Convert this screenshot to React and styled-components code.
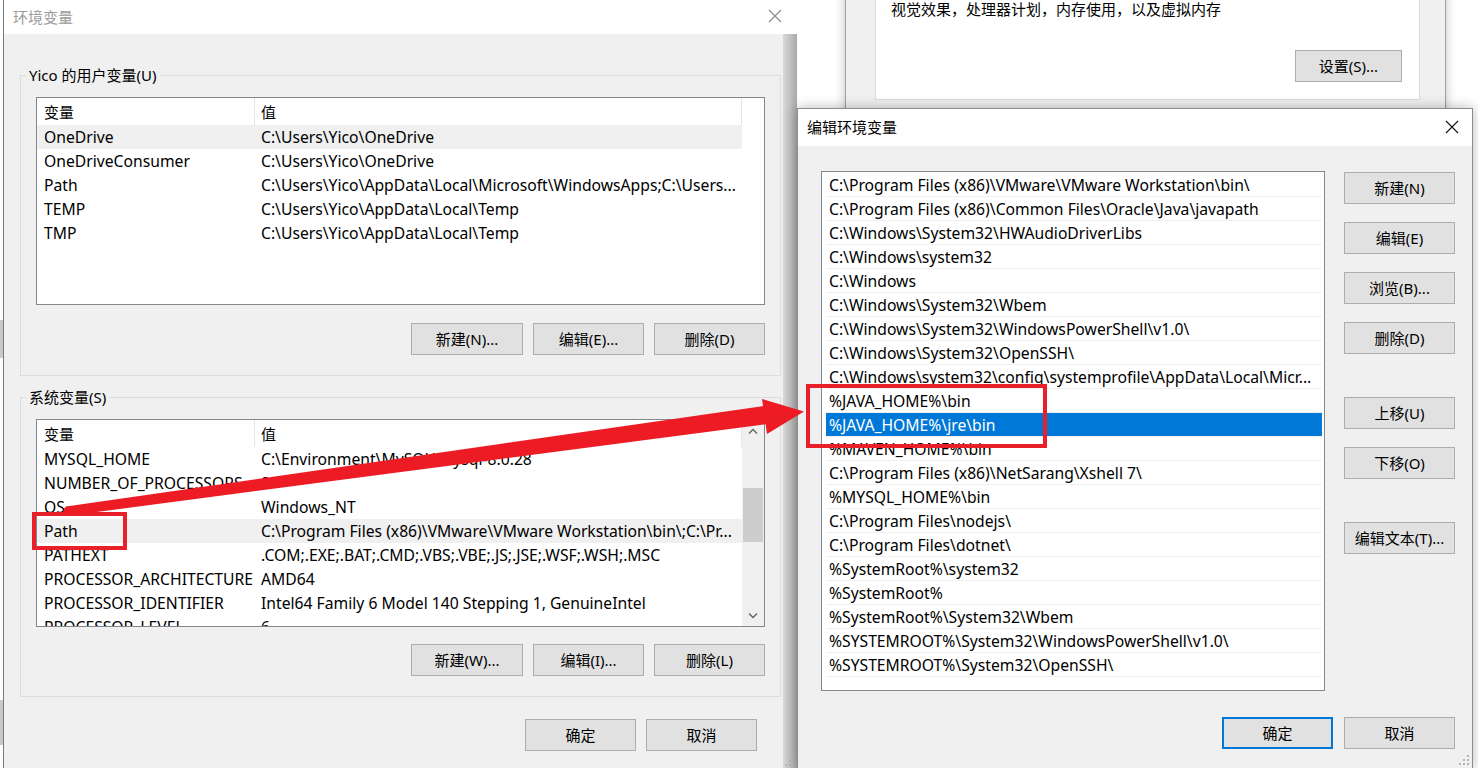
import React from "react";
import styled, { createGlobalStyle } from "styled-components";

const bs = (s) => s.replace(/\//g, "\\");

const userVars = [
  ["OneDrive", "C:/Users/Yico/OneDrive", true],
  ["OneDriveConsumer", "C:/Users/Yico/OneDrive"],
  ["Path", "C:/Users/Yico/AppData/Local/Microsoft/WindowsApps;C:/Users..."],
  ["TEMP", "C:/Users/Yico/AppData/Local/Temp"],
  ["TMP", "C:/Users/Yico/AppData/Local/Temp"],
];

const systemVars = [
  ["MYSQL_HOME", "C:/Environment/MySQL/mysql-8.0.28"],
  ["NUMBER_OF_PROCESSORS", "8"],
  ["OS", "Windows_NT"],
  ["Path", "C:/Program Files (x86)/VMware/VMware Workstation/bin/;C:/Pr...", true],
  ["PATHEXT", ".COM;.EXE;.BAT;.CMD;.VBS;.VBE;.JS;.JSE;.WSF;.WSH;.MSC"],
  ["PROCESSOR_ARCHITECTURE", "AMD64"],
  ["PROCESSOR_IDENTIFIER", "Intel64 Family 6 Model 140 Stepping 1, GenuineIntel"],
  ["PROCESSOR_LEVEL", "6"],
];

const pathEntries = [
  "C:/Program Files (x86)/VMware/VMware Workstation/bin/",
  "C:/Program Files (x86)/Common Files/Oracle/Java/javapath",
  "C:/Windows/System32/HWAudioDriverLibs",
  "C:/Windows/system32",
  "C:/Windows",
  "C:/Windows/System32/Wbem",
  "C:/Windows/System32/WindowsPowerShell/v1.0/",
  "C:/Windows/System32/OpenSSH/",
  "C:/Windows/system32/config/systemprofile/AppData/Local/Micr...",
  "%JAVA_HOME%/bin",
  "%JAVA_HOME%/jre/bin",
  "%MAVEN_HOME%/bin",
  "C:/Program Files (x86)/NetSarang/Xshell 7/",
  "%MYSQL_HOME%/bin",
  "C:/Program Files/nodejs/",
  "C:/Program Files/dotnet/",
  "%SystemRoot%/system32",
  "%SystemRoot%",
  "%SystemRoot%/System32/Wbem",
  "%SYSTEMROOT%/System32/WindowsPowerShell/v1.0/",
  "%SYSTEMROOT%/System32/OpenSSH/",
];

const sideButtons = [
  ["新建(N)", 1],
  ["编辑(E)", 18],
  ["浏览(B)...", 18],
  ["删除(D)", 18],
  ["上移(U)", 43],
  ["下移(O)", 18],
  ["编辑文本(T)...", 43],
];

const GlobalStyle = createGlobalStyle`
  * { box-sizing: border-box; }
  body {
    margin: 0;
    background: #fff;
    font-family: "Noto Sans", "Noto Sans CJK SC", sans-serif;
    font-size: 15px;
    color: #000;
  }
`;

const Desktop = styled.div`
  position: relative;
  width: 1478px;
  height: 768px;
  overflow: hidden;
  background: #fff;
`;

const LeftStrip = styled.div`
  position: absolute;
  left: 0;
  top: 0;
  width: 3px;
  height: 768px;
  background: linear-gradient(
    to bottom,
    #fff 0 320px,
    #c8c8c8 320px 358px,
    #fff 358px 700px,
    #c8c8c8 700px 745px,
    #fff 745px
  );
`;

/* ---------- windows ---------- */

const BackWindow = styled.div`
  position: absolute;
  left: 845px;
  top: -20px;
  width: 601px;
  height: 240px;
  z-index: 1;
  background: #f0f0f0;
  border-left: 1px solid #a0a0a0;
  border-right: 1px solid #a0a0a0;
  box-shadow: 0 0 10px rgba(0, 0, 0, 0.25);
  padding-left: 29px;
`;

const InfoPanel = styled.div`
  width: 545px;
  background: #fff;
  border: 1px solid #dcdcdc;
  padding: 18px 17px 17px 15px;
  display: flex;
  flex-direction: column;
`;

const InfoText = styled.div`
  line-height: 20px;
  white-space: nowrap;
`;

const EnvWindow = styled.div`
  position: absolute;
  left: 3px;
  top: 0;
  width: 794px;
  height: 768px;
  z-index: 2;
  border-left: 1px solid #7a7a7a;
  display: flex;
  flex-direction: column;
`;

const EditWindow = styled.div`
  position: absolute;
  left: 797px;
  top: 108px;
  width: 676px;
  height: 662px;
  z-index: 3;
  border: 1px solid #8c8c8c;
  box-shadow: 0 0 12px rgba(0, 0, 0, 0.28);
  display: flex;
  flex-direction: column;
`;

const TitleBar = styled.div`
  height: ${(p) => p.$height}px;
  flex: none;
  background: #fff;
  display: flex;
  align-items: center;
  justify-content: space-between;
  padding: 0 ${(p) => p.$padRight}px 2px ${(p) => p.$padLeft}px;
  color: ${(p) => (p.$active ? "#000" : "#9b9b9b")};
  font-size: 15px;
`;

const EnvBody = styled.div`
  flex: 1;
  padding: 41px 16px 0 16px;
  display: flex;
  flex-direction: column;
  background: linear-gradient(
    to right,
    #f0f0f0 calc(100% - 14px),
    #d9d9d9 calc(100% - 14px),
    #a9a9a9 100%
  );
`;

const EditBody = styled.div`
  flex: 1;
  background: #f0f0f0;
  padding: 25px 17px 0 23px;
  display: flex;
  flex-direction: column;
`;

/* ---------- group boxes ---------- */

const GroupBox = styled.div`
  width: 761px;
  margin-top: ${(p) => p.$top || 0}px;
  border: 1px solid #dcdcdc;
  padding: 0 15px 20px 15px;
  display: flex;
  flex-direction: column;
`;

const Legend = styled.div`
  align-self: flex-start;
  margin: -11px 0 0 -10px;
  padding: 0 3px;
  line-height: 20px;
  background: #f0f0f0;
`;

/* ---------- list views ---------- */

const ListView = styled.div`
  margin-top: 12px;
  height: 208px;
  background: #fff;
  border: 1px solid #828790;
  display: flex;
  overflow: hidden;
`;

const Table = styled.div`
  width: 705px;
  flex: none;
  display: flex;
  flex-direction: column;
`;

const HeaderRow = styled.div`
  height: 27px;
  flex: none;
  display: grid;
  grid-template-columns: 218px 487px;
`;

const HeaderCell = styled.div`
  border-right: 1px solid #e5e5e5;
  padding-left: ${(p) => p.$pad}px;
  display: flex;
  align-items: center;
`;

const DataRow = styled.div`
  height: 24px;
  flex: none;
  display: grid;
  grid-template-columns: 218px 487px;
  align-items: center;
  font-size: 15.7px;
  background: ${(p) => (p.$selected ? "#f0f0f0" : "transparent")};
`;

const Cell = styled.div`
  padding-left: ${(p) => p.$pad}px;
  white-space: nowrap;
  overflow: hidden;
`;

const Scrollbar = styled.div`
  flex: 1;
  background: #f0f0f0;
  display: flex;
  flex-direction: column;
`;

const ScrollArrow = styled.div`
  height: 21px;
  flex: none;
  display: flex;
  align-items: center;
  justify-content: center;
`;

const ScrollTrack = styled.div`
  flex: 1;
  padding: 0 1px;
`;

const Thumb = styled.div`
  margin-top: 47px;
  height: 54px;
  background: #cdcdcd;
`;

const PathList = styled.div`
  width: 504px;
  height: 520px;
  flex: none;
  background: #fff;
  border: 1px solid #828790;
  padding: 1px 2px 0 4px;
  overflow: hidden;
`;

const PathRow = styled.div`
  height: 24px;
  padding-left: 3px;
  display: flex;
  align-items: center;
  white-space: nowrap;
  font-size: 15.7px;
  border-bottom: 1px solid #f0f0f0;
  background: ${(p) => (p.$selected ? "#0078d7" : "#fff")};
  color: ${(p) => (p.$selected ? "#fff" : "#000")};
`;

/* ---------- buttons ---------- */

const ButtonRow = styled.div`
  margin-top: ${(p) => p.$top}px;
  padding-right: ${(p) => p.$right || 0}px;
  display: flex;
  justify-content: flex-end;
  gap: ${(p) => p.$gap || 10}px;
`;

const Button = styled.button`
  width: ${(p) => p.$width || 111}px;
  height: 32px;
  flex: none;
  margin-top: ${(p) => p.$top || 0}px;
  background: #e1e1e1;
  border: ${(p) => (p.$default ? "2px solid #0078d7" : "1px solid #adadad")};
  font: inherit;
  font-size: 15px;
  color: #000;
  padding: 0 0 2px;
  display: flex;
  align-items: center;
  justify-content: center;
  white-space: nowrap;
`;

const SettingsButton = styled(Button)`
  align-self: flex-end;
`;

const EditMain = styled.div`
  display: flex;
  gap: 19px;
`;

const SideColumn = styled.div`
  display: flex;
  flex-direction: column;
`;

/* ---------- annotations ---------- */

const Overlay = styled.svg`
  position: absolute;
  left: 0;
  top: 0;
  z-index: 5;
  pointer-events: none;
`;

const MarkBox = styled.div`
  position: absolute;
  z-index: 5;
  left: ${(p) => p.$x}px;
  top: ${(p) => p.$y}px;
  width: ${(p) => p.$w}px;
  height: ${(p) => p.$h}px;
  border: 4px solid #e8202a;
  pointer-events: none;
`;

const Grip = styled.div`
  position: absolute;
  right: ${(p) => p.$right}px;
  bottom: ${(p) => p.$bottom}px;
  width: 12px;
  height: 12px;
  line-height: 0;
`;

/* ---------- small drawings ---------- */

const CloseIcon = ({ color }) => (
  <svg width="14" height="14" viewBox="0 0 14 14">
    <path d="M1 1L13 13M13 1L1 13" stroke={color} strokeWidth="1.1" fill="none" />
  </svg>
);

const Chevron = ({ up }) => (
  <svg width="10" height="6" viewBox="0 0 10 6">
    <path
      d={up ? "M1 5.5L5 1.5L9 5.5" : "M1 0.5L5 4.5L9 0.5"}
      stroke="#606060"
      strokeWidth="1.3"
      fill="none"
    />
  </svg>
);

const GripDots = () => (
  <svg width="12" height="12" viewBox="0 0 12 12">
    {[
      [9, 1],
      [9, 5],
      [5, 5],
      [9, 9],
      [5, 9],
      [1, 9],
    ].map(([x, y]) => (
      <rect key={`${x}-${y}`} x={x} y={y} width="2" height="2" fill="#b4b4b4" />
    ))}
  </svg>
);

const VarList = ({ rows, scroll }) => (
  <ListView>
    <Table>
      <HeaderRow>
        <HeaderCell $pad={7}>变量</HeaderCell>
        <HeaderCell $pad={6}>值</HeaderCell>
      </HeaderRow>
      {rows.map(([name, value, selected]) => (
        <DataRow key={name + value} $selected={selected}>
          <Cell $pad={7}>{name}</Cell>
          <Cell $pad={6}>{bs(value)}</Cell>
        </DataRow>
      ))}
    </Table>
    {scroll && (
      <Scrollbar>
        <ScrollArrow>
          <Chevron up />
        </ScrollArrow>
        <ScrollTrack>
          <Thumb />
        </ScrollTrack>
        <ScrollArrow>
          <Chevron />
        </ScrollArrow>
      </Scrollbar>
    )}
  </ListView>
);

export default function App() {
  return (
    <Desktop>
      <GlobalStyle />
      <LeftStrip />

      <BackWindow>
        <InfoPanel>
          <InfoText>视觉效果，处理器计划，内存使用，以及虚拟内存</InfoText>
          <SettingsButton $width={107} $top={31}>
            设置(S)...
          </SettingsButton>
        </InfoPanel>
      </BackWindow>

      <EnvWindow>
        <TitleBar $height={34} $padLeft={9} $padRight={15}>
          <span>环境变量</span>
          <CloseIcon color="#8a8a8a" />
        </TitleBar>
        <EnvBody>
          <GroupBox>
            <Legend>Yico 的用户变量(U)</Legend>
            <VarList rows={userVars} />
            <ButtonRow $top={18}>
              <Button $width={112}>新建(N)...</Button>
              <Button>编辑(E)...</Button>
              <Button>删除(D)</Button>
            </ButtonRow>
          </GroupBox>

          <GroupBox $top={21}>
            <Legend>系统变量(S)</Legend>
            <VarList rows={systemVars} scroll />
            <ButtonRow $top={17}>
              <Button $width={112}>新建(W)...</Button>
              <Button>编辑(I)...</Button>
              <Button>删除(L)</Button>
            </ButtonRow>
          </GroupBox>

          <ButtonRow $top={22} $right={24}>
            <Button>确定</Button>
            <Button>取消</Button>
          </ButtonRow>
        </EnvBody>
        <Grip $right={1} $bottom={1}>
          <GripDots />
        </Grip>
      </EnvWindow>

      <EditWindow>
        <TitleBar $height={37} $padLeft={9} $padRight={13} $active>
          <span>编辑环境变量</span>
          <CloseIcon color="#111" />
        </TitleBar>
        <EditBody>
          <EditMain>
            <PathList>
              {pathEntries.map((entry, i) => (
                <PathRow key={entry} $selected={i === 10}>
                  {bs(entry)}
                </PathRow>
              ))}
            </PathList>
            <SideColumn>
              {sideButtons.map(([label, top]) => (
                <Button key={label} $top={top}>
                  {label}
                </Button>
              ))}
            </SideColumn>
          </EditMain>
          <ButtonRow $top={26} $gap={11}>
            <Button $default>确定</Button>
            <Button>取消</Button>
          </ButtonRow>
        </EditBody>
        <Grip $right={2} $bottom={3}>
          <GripDots />
        </Grip>
      </EditWindow>

      <MarkBox $x={32} $y={512} $w={95} $h={38} />
      <MarkBox $x={806} $y={384} $w={241} $h={64} />

      <Overlay width="1478" height="768" viewBox="0 0 1478 768">
        <circle cx="68" cy="511" r="4.5" fill="#ed1c24" />
        <polygon points="66,506.5 764,406 767,424 70,515.5" fill="#ed1c24" />
        <polygon points="762,399 804,411.5 767,434" fill="#ed1c24" />
      </Overlay>
    </Desktop>
  );
}
